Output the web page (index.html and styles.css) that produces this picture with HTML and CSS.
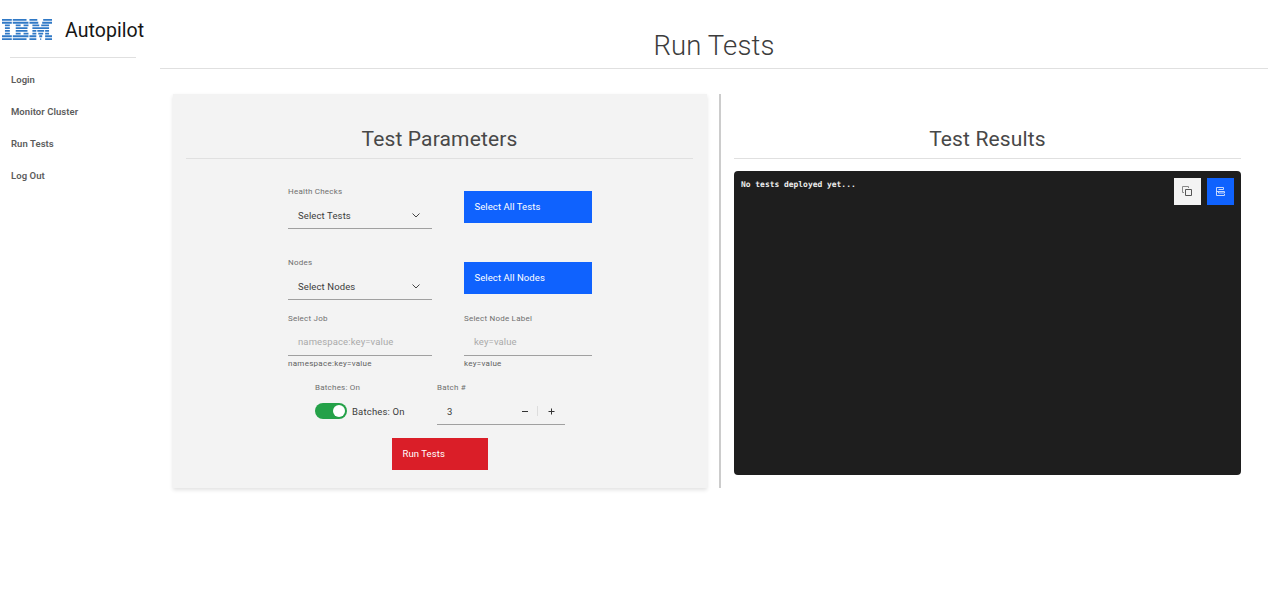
FILE: index.html
```html
<!DOCTYPE html>
<html lang="en">
<head>
<meta charset="utf-8">
<title>Autopilot</title>
<link rel="stylesheet" href="styles.css">
</head>
<body>
<div class="app">
  <aside class="sidebar">
    <div class="brand">
      <svg class="logo" viewBox="0 0 51 22" preserveAspectRatio="none" fill="none" stroke="#3079c6" stroke-width="1.9" aria-label="IBM">
        <path d="M0 1H10M11 1H25M28 1H36M42 1H51"/>
        <path d="M0 3.9H10M11 3.9H27M28 3.9H37M41 3.9H51"/>
        <path d="M3 6.7H8M14 6.7H19M22 6.7H27M31 6.7H38M40 6.7H48"/>
        <path d="M3 9.6H8M14 9.6H26M31 9.6H48"/>
        <path d="M3 12.4H8M14 12.4H26M31 12.4H35M36 12.4H43M44 12.4H48"/>
        <path d="M3 15.3H8M14 15.3H19M22 15.3H27M31 15.3H35M37 15.3H42M44 15.3H48"/>
        <path d="M0 18.1H10M11 18.1H27M28 18.1H35M38 18.1H41M44 18.1H51"/>
        <path d="M0 21H10M11 21H25M28 21H35M39 21H40M44 21H51"/>
      </svg>
      <span class="brand-name">Autopilot</span>
    </div>
    <nav class="nav">
      <a>Login</a>
      <a>Monitor Cluster</a>
      <a>Run Tests</a>
      <a>Log Out</a>
    </nav>
  </aside>
  <main class="main">
    <h1 class="page-title">Run Tests</h1>
    <div class="columns">
      <section class="params">
        <h2 class="section-title">Test Parameters</h2>
        <div class="form">
          <div class="row">
            <div class="field wide">
              <label class="label">Health Checks</label>
              <div class="control"><span>Select Tests</span><svg class="chevron" viewBox="0 0 8 5"><path d="M.5 .5L4 4L7.5 .5"/></svg></div>
            </div>
            <button class="btn primary">Select All Tests</button>
          </div>
          <div class="row">
            <div class="field wide">
              <label class="label">Nodes</label>
              <div class="control"><span>Select Nodes</span><svg class="chevron" viewBox="0 0 8 5"><path d="M.5 .5L4 4L7.5 .5"/></svg></div>
            </div>
            <button class="btn primary">Select All Nodes</button>
          </div>
          <div class="row third">
            <div class="field wide">
              <label class="label">Select Job</label>
              <div class="control hint">namespace:key=value</div>
              <div class="helper">namespace:key=value</div>
            </div>
            <div class="field">
              <label class="label">Select Node Label</label>
              <div class="control hint">key=value</div>
              <div class="helper">key=value</div>
            </div>
          </div>
          <div class="row batch">
            <div class="field toggle-field">
              <label class="label">Batches: On</label>
              <div class="toggle-line"><span class="toggle"></span><span>Batches: On</span></div>
            </div>
            <div class="field">
              <label class="label">Batch #</label>
              <div class="control"><span>3</span>
                <svg class="stepper" viewBox="0 0 36 12"><path class="sign" d="M2 6.500H8M28.500 6.500H34.500M31.500 3.500V9.500"/><path class="rule" d="M17.500 1V11"/></svg>
              </div>
            </div>
          </div>
          <button class="btn danger">Run Tests</button>
        </div>
      </section>
      <section class="results">
        <h2 class="section-title">Test Results</h2>
        <div class="terminal">
          <code class="output">No tests deployed yet...</code>
          <div class="tools">
            <button class="tool light"><svg viewBox="0 0 11 11"><path d="M3.500 3.500H9.500V9.500H3.500Z"/><path class="back" d="M2 6.500H.5V.5H6.500V2"/></svg></button>
            <button class="tool blue"><svg viewBox="0 0 11 11"><path d="M1.500 1.500H8.500V3.500H3.500M3.500 5.500H9.500V7H3.500ZM3.500 9.500H9.500V8M1.500 1.500V9.500H4.500M1.500 5.500H4.500"/></svg></button>
          </div>
        </div>
      </section>
    </div>
  </main>
</div>
</body>
</html>
```
FILE: styles.css
```css
* { box-sizing: border-box; }
body { margin: 0; background: #fff; font-family: Roboto, "Open Sans", sans-serif; color: #3c3c3c; font-size: 9.5px; letter-spacing: .06px; }
.app { display: flex; width: 1268px; height: 600px; }
.sidebar { width: 160px; flex: none; }
.brand { display: flex; height: 57px; padding: 19px 0 0 2px; }
.logo { width: 50px; height: 21px; flex: none; }
.brand-name { margin-left: 13px; font-size: 19.500px; line-height: 23px; color: #161616; white-space: nowrap; }
.nav { display: flex; flex-direction: column; margin-left: 10px; width: 126px; border-top: 1px solid #e0e0e0; padding: 6px 0 0 1px; }
.nav a { height: 32px; line-height: 31px; font-weight: 600; color: #5c5c5c; }
.main { flex: 1; }
.page-title { margin: 0; height: 69px; padding-top: 27px; border-bottom: 1px solid #e0e0e0; font-size: 27.500px; line-height: 37px; font-weight: 300; text-align: center; letter-spacing: .15px; }
.columns { display: flex; margin-top: 25px; height: 394px; }
.params { width: 534px; margin-left: 13px; padding: 0 14px 0 13px; background: #f3f3f3; box-shadow: 0 2px 4px rgba(0,0,0,.12); }
.section-title { margin: 0; height: 65px; padding-top: 32px; line-height: 27px; border-bottom: 1px solid #e0e0e0; font-size: 21px; font-weight: 400; text-align: center; color: #484848; letter-spacing: .15px; }
.results { margin-left: 12px; border-left: 2px solid #ccc; padding-left: 13px; width: 522px; }
.form { padding-left: 102px; display: flex; flex-direction: column; }
.row { display: flex; gap: 32px; height: 71px; padding-top: 26px; }
.row.third { padding-top: 11px; height: 69px; }
.row.batch { padding: 11px 0 0 27px; gap: 0; height: 57px; }
.field { width: 128px; }
.field.wide { width: 144px; }
.toggle-field { width: 122px; }
.label, .helper { display: block; font-size: 8px; line-height: 14px; color: #6f6f6f; letter-spacing: .22px; }
.helper { padding-top: 1px; color: #606060; letter-spacing: .28px; }
.control { display: flex; justify-content: space-between; align-items: center; height: 30px; padding: 3px 10px 0; border-bottom: 1px solid #a0a0a0; letter-spacing: .12px; }
.hint { color: #aaa; padding-top: 2px; }
.chevron { width: 8px; height: 5px; margin-right: 2px; fill: none; stroke: #444; }
.stepper { width: 36px; height: 12px; margin-right: -1px; }
.sign { stroke: #333; stroke-width: 1; }
.rule { stroke: #ddd; }
.toggle-line { display: flex; align-items: center; gap: 5px; padding-top: 8px; letter-spacing: .18px; }
.toggle { width: 32px; height: 16px; border-radius: 8px; background: #24a148; display: flex; justify-content: flex-end; padding: 2px; }
.toggle::after { content: ""; width: 12px; height: 12px; border-radius: 50%; background: #fff; }
.btn { display: block; border: 0; height: 32px; padding: 0 10px 1px 10.500px; color: #fff; font: inherit; letter-spacing: .08px; text-align: left; }
.primary { width: 128px; background: #0f62fe; margin-top: 6px; }
.danger { width: 96px; background: #da1e28; margin: 11px 0 0 104px; }
.terminal { margin-top: 12px; height: 304px; width: 507px; background: #1e1e1e; border-radius: 4px; padding: 7px; display: flex; justify-content: space-between; }
.output { font: bold 7.950px/14px "DejaVu Sans Mono", monospace; letter-spacing: 0; color: #eee; }
.tools { display: flex; gap: 6px; }
.tool { width: 27px; height: 27px; border: 0; padding: 8px; }
.tool svg { display: block; width: 11px; height: 11px; fill: none; stroke: #555; stroke-width: 1; }
.tool .back { stroke: #888; }
.light { background: #f3f3f3; }
.blue { background: #0f62fe; }
.blue svg { stroke: #c5d8ff; }
```
